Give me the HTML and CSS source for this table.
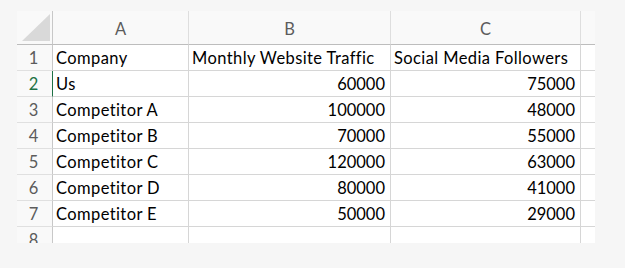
FILE: index.html
```html
<!DOCTYPE html>
<html>
<head>
<meta charset="utf-8">
<link rel="stylesheet" href="styles.css">
</head>
<body>
<div class="sheet">
  <div class="grid">
    <div class="corner"><div class="tri"></div></div>
    <div class="colhead">A</div>
    <div class="colhead">B</div>
    <div class="colhead">C</div>
    <div class="colhead last"></div>

    <div class="rowhead">1</div>
    <div class="cell">Company</div>
    <div class="cell">Monthly Website Traffic</div>
    <div class="cell">Social Media Followers</div>
    <div class="cell last"></div>

    <div class="rowhead sel">2</div>
    <div class="cell active">Us</div>
    <div class="cell num">60000</div>
    <div class="cell num">75000</div>
    <div class="cell last"></div>

    <div class="rowhead">3</div>
    <div class="cell">Competitor A</div>
    <div class="cell num">100000</div>
    <div class="cell num">48000</div>
    <div class="cell last"></div>

    <div class="rowhead">4</div>
    <div class="cell">Competitor B</div>
    <div class="cell num">70000</div>
    <div class="cell num">55000</div>
    <div class="cell last"></div>

    <div class="rowhead">5</div>
    <div class="cell">Competitor C</div>
    <div class="cell num">120000</div>
    <div class="cell num">63000</div>
    <div class="cell last"></div>

    <div class="rowhead">6</div>
    <div class="cell">Competitor D</div>
    <div class="cell num">80000</div>
    <div class="cell num">41000</div>
    <div class="cell last"></div>

    <div class="rowhead">7</div>
    <div class="cell">Competitor E</div>
    <div class="cell num">50000</div>
    <div class="cell num">29000</div>
    <div class="cell last"></div>

    <div class="rowhead">8</div>
    <div class="cell"></div>
    <div class="cell"></div>
    <div class="cell"></div>
    <div class="cell last"></div>
  </div>
</div>
</body>
</html>
```
FILE: styles.css
```css
html, body {
  margin: 0;
  padding: 0;
  background: #f6f6f6;
}
body {
  font-family: Lato, "Open Sans", sans-serif;
}
.sheet {
  margin: 11px 0 0 17px;
  width: 578px;
  height: 232px;
  overflow: hidden;
  background: #ffffff;
}
.grid {
  display: grid;
  grid-template-columns: 36px 136px 202px 190px 15px;
  grid-template-rows: 34px repeat(7, 26px) 26px;
}
.grid > div {
  box-sizing: border-box;
  border-right: 1px solid #d6d6d6;
  border-bottom: 1px solid #d6d6d6;
  white-space: nowrap;
  overflow: hidden;
}
.corner {
  background: #f9f9f9;
  position: relative;
  border-bottom-color: #bdbdbd !important;
  border-right-color: #c8c8c8 !important;
}
.tri {
  position: absolute;
  left: 5px;
  top: 3px;
  width: 28px;
  height: 27px;
  background: #d9d9d9;
  clip-path: polygon(100% 0, 100% 100%, 0 100%);
}
.colhead {
  background: #f9f9f9;
  color: #5c5c5c;
  font-size: 16.5px;
  display: flex;
  align-items: center;
  justify-content: center;
  padding-top: 2px;
  border-bottom-color: #bdbdbd !important;
  border-right-color: #dedede !important;
}
.rowhead {
  background: #f9f9f9;
  color: #5c5c5c;
  font-size: 16.5px;
  display: flex;
  align-items: center;
  justify-content: center;
  padding-right: 2px;
  border-right-color: #c8c8c8 !important;
  border-bottom-color: #e0e0e0 !important;
}
.rowhead.sel {
  color: #1e7145;
  border-right: 1px solid #1e7145 !important;
}
.cell {
  color: #000;
  font-size: 16.5px;
  letter-spacing: 0.4px;
  display: flex;
  align-items: center;
  padding: 1px 4px 0 3px;
}
.cell.num {
  justify-content: flex-end;
  letter-spacing: 0;
  padding-right: 5px;
}
.last {
  border-right: none !important;
}
```
